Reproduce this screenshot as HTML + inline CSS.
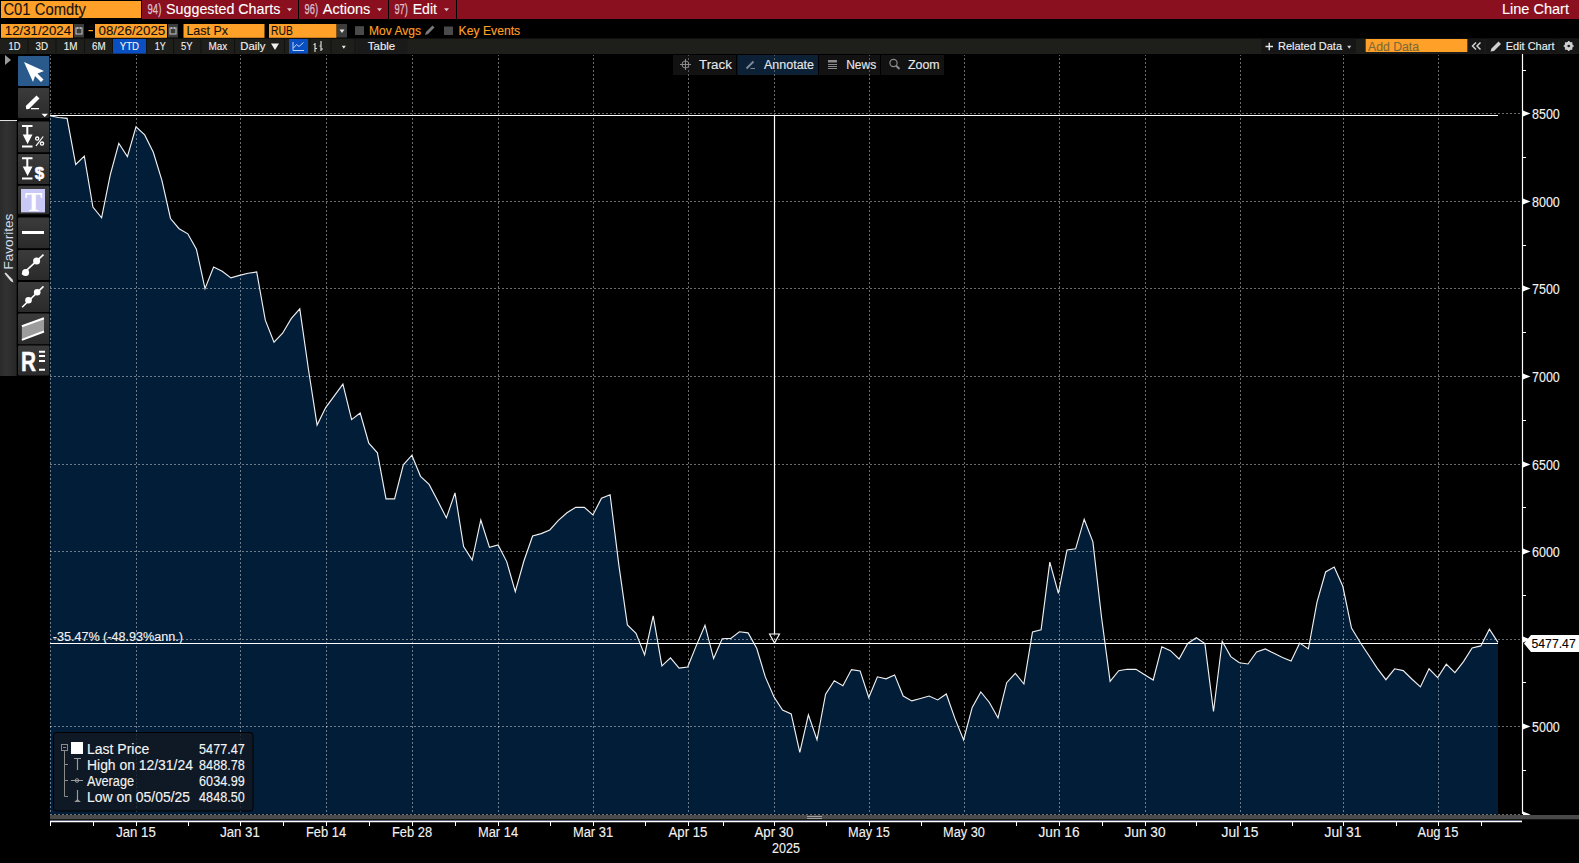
<!DOCTYPE html>
<html><head><meta charset="utf-8"><style>
*{margin:0;padding:0}
html,body{width:1579px;height:863px;overflow:hidden;background:#000}
svg{position:absolute;left:0;top:0;display:block}
</style></head><body>
<svg width="1579" height="863" viewBox="0 0 1579 863">
<polygon points="49.85,814.5 49.9,115.8 58.5,117.5 67.1,118.4 75.7,164.5 84.3,156.1 92.9,207.0 101.6,217.8 110.2,175.2 118.8,143.3 127.4,156.6 136.0,126.8 144.7,134.9 153.3,152.3 161.9,180.3 170.5,218.5 179.1,228.7 187.8,233.8 196.4,249.1 205.0,288.6 213.6,267.0 222.2,271.3 230.9,277.9 239.5,275.4 248.1,273.3 256.7,272.0 265.3,320.2 274.0,342.2 282.6,333.2 291.2,318.7 299.8,308.8 308.4,369.0 317.1,425.0 325.7,407.6 334.3,395.8 342.9,384.1 351.6,419.6 360.2,413.0 368.8,443.1 377.4,452.8 386.0,498.9 394.6,498.9 403.3,464.8 411.9,455.2 420.5,476.3 429.1,484.4 437.8,501.0 446.4,517.9 455.0,492.9 463.6,546.5 472.2,560.0 480.8,520.0 489.5,547.4 498.1,545.0 506.7,561.6 515.3,591.7 523.9,561.0 532.6,536.0 541.2,533.6 549.8,530.0 558.4,520.3 567.0,512.8 575.7,507.3 584.3,507.3 592.9,514.9 601.5,498.3 610.1,494.7 618.8,564.6 627.4,625.0 636.0,633.4 644.6,654.9 653.2,615.9 661.9,665.9 670.5,657.8 679.1,668.1 687.7,667.0 696.3,645.6 705.0,625.2 713.6,658.6 722.2,638.8 730.8,638.4 739.4,631.8 748.1,632.9 756.7,648.3 765.3,676.9 773.9,696.7 782.5,710.0 791.2,713.9 799.8,752.3 808.4,714.9 817.0,739.8 825.6,694.2 834.3,680.8 842.9,685.7 851.5,669.6 860.1,670.9 868.8,697.5 877.4,676.8 886.0,678.8 894.6,674.9 903.2,696.0 911.8,700.9 920.5,698.5 929.1,696.0 937.7,699.9 946.3,694.0 954.9,718.4 963.6,739.9 972.2,707.4 980.8,692.0 989.4,702.5 998.0,718.0 1006.7,682.7 1015.3,673.3 1023.9,684.0 1032.5,632.0 1041.1,629.9 1049.8,562.1 1058.4,593.3 1067.0,549.9 1075.6,548.8 1084.2,519.2 1092.9,541.9 1101.5,617.0 1110.1,681.3 1118.7,670.7 1127.3,669.3 1136.0,669.3 1144.6,674.7 1153.2,680.0 1161.8,646.7 1170.4,650.7 1179.1,659.0 1187.7,643.5 1196.3,637.8 1204.9,643.6 1213.5,711.5 1222.2,641.3 1230.8,656.6 1239.4,662.8 1248.0,664.0 1256.6,652.0 1265.3,648.9 1273.9,653.3 1282.5,657.5 1291.1,661.0 1299.7,643.1 1308.4,648.9 1317.0,602.1 1325.6,572.0 1334.2,567.1 1342.8,586.3 1351.5,628.1 1360.1,642.2 1368.7,655.3 1377.3,668.3 1385.9,679.7 1394.6,668.8 1403.2,670.6 1411.8,679.0 1420.4,686.9 1429.0,668.8 1437.7,677.6 1446.3,664.2 1454.9,672.6 1463.5,661.6 1472.1,648.0 1480.8,645.9 1489.4,629.2 1498.0,642.4 1498.0,814.5" fill="#021d38"/>
<line x1="50" y1="113.5" x2="1522" y2="113.5" stroke="#ffffff" stroke-width="1" stroke-dasharray="2,2" opacity="0.42"/>
<line x1="50" y1="201.5" x2="1522" y2="201.5" stroke="#ffffff" stroke-width="1" stroke-dasharray="2,2" opacity="0.42"/>
<line x1="50" y1="288.5" x2="1522" y2="288.5" stroke="#ffffff" stroke-width="1" stroke-dasharray="2,2" opacity="0.42"/>
<line x1="50" y1="376.5" x2="1522" y2="376.5" stroke="#ffffff" stroke-width="1" stroke-dasharray="2,2" opacity="0.42"/>
<line x1="50" y1="464.5" x2="1522" y2="464.5" stroke="#ffffff" stroke-width="1" stroke-dasharray="2,2" opacity="0.42"/>
<line x1="50" y1="551.5" x2="1522" y2="551.5" stroke="#ffffff" stroke-width="1" stroke-dasharray="2,2" opacity="0.42"/>
<line x1="50" y1="639.5" x2="1522" y2="639.5" stroke="#ffffff" stroke-width="1" stroke-dasharray="2,2" opacity="0.42"/>
<line x1="50" y1="726.5" x2="1522" y2="726.5" stroke="#ffffff" stroke-width="1" stroke-dasharray="2,2" opacity="0.42"/>
<line x1="50" y1="814.5" x2="1522" y2="814.5" stroke="#ffffff" stroke-width="1" stroke-dasharray="2,2" opacity="0.42"/>
<line x1="50.5" y1="55" x2="50.5" y2="814" stroke="#ffffff" stroke-width="1" stroke-dasharray="2,2" stroke-dashoffset="1" opacity="0.42"/>
<line x1="136.5" y1="55" x2="136.5" y2="814" stroke="#ffffff" stroke-width="1" stroke-dasharray="2,2" stroke-dashoffset="1" opacity="0.42"/>
<line x1="240.5" y1="55" x2="240.5" y2="814" stroke="#ffffff" stroke-width="1" stroke-dasharray="2,2" stroke-dashoffset="1" opacity="0.42"/>
<line x1="326.5" y1="55" x2="326.5" y2="814" stroke="#ffffff" stroke-width="1" stroke-dasharray="2,2" stroke-dashoffset="1" opacity="0.42"/>
<line x1="412.5" y1="55" x2="412.5" y2="814" stroke="#ffffff" stroke-width="1" stroke-dasharray="2,2" stroke-dashoffset="1" opacity="0.42"/>
<line x1="498.5" y1="55" x2="498.5" y2="814" stroke="#ffffff" stroke-width="1" stroke-dasharray="2,2" stroke-dashoffset="1" opacity="0.42"/>
<line x1="593.5" y1="55" x2="593.5" y2="814" stroke="#ffffff" stroke-width="1" stroke-dasharray="2,2" stroke-dashoffset="1" opacity="0.42"/>
<line x1="688.5" y1="55" x2="688.5" y2="814" stroke="#ffffff" stroke-width="1" stroke-dasharray="2,2" stroke-dashoffset="1" opacity="0.42"/>
<line x1="774.5" y1="55" x2="774.5" y2="814" stroke="#ffffff" stroke-width="1" stroke-dasharray="2,2" stroke-dashoffset="1" opacity="0.42"/>
<line x1="869.5" y1="55" x2="869.5" y2="814" stroke="#ffffff" stroke-width="1" stroke-dasharray="2,2" stroke-dashoffset="1" opacity="0.42"/>
<line x1="964.5" y1="55" x2="964.5" y2="814" stroke="#ffffff" stroke-width="1" stroke-dasharray="2,2" stroke-dashoffset="1" opacity="0.42"/>
<line x1="1059.5" y1="55" x2="1059.5" y2="814" stroke="#ffffff" stroke-width="1" stroke-dasharray="2,2" stroke-dashoffset="1" opacity="0.42"/>
<line x1="1145.5" y1="55" x2="1145.5" y2="814" stroke="#ffffff" stroke-width="1" stroke-dasharray="2,2" stroke-dashoffset="1" opacity="0.42"/>
<line x1="1240.5" y1="55" x2="1240.5" y2="814" stroke="#ffffff" stroke-width="1" stroke-dasharray="2,2" stroke-dashoffset="1" opacity="0.42"/>
<line x1="1343.5" y1="55" x2="1343.5" y2="814" stroke="#ffffff" stroke-width="1" stroke-dasharray="2,2" stroke-dashoffset="1" opacity="0.42"/>
<line x1="1438.5" y1="55" x2="1438.5" y2="814" stroke="#ffffff" stroke-width="1" stroke-dasharray="2,2" stroke-dashoffset="1" opacity="0.42"/>
<polyline points="49.9,115.8 58.5,117.5 67.1,118.4 75.7,164.5 84.3,156.1 92.9,207.0 101.6,217.8 110.2,175.2 118.8,143.3 127.4,156.6 136.0,126.8 144.7,134.9 153.3,152.3 161.9,180.3 170.5,218.5 179.1,228.7 187.8,233.8 196.4,249.1 205.0,288.6 213.6,267.0 222.2,271.3 230.9,277.9 239.5,275.4 248.1,273.3 256.7,272.0 265.3,320.2 274.0,342.2 282.6,333.2 291.2,318.7 299.8,308.8 308.4,369.0 317.1,425.0 325.7,407.6 334.3,395.8 342.9,384.1 351.6,419.6 360.2,413.0 368.8,443.1 377.4,452.8 386.0,498.9 394.6,498.9 403.3,464.8 411.9,455.2 420.5,476.3 429.1,484.4 437.8,501.0 446.4,517.9 455.0,492.9 463.6,546.5 472.2,560.0 480.8,520.0 489.5,547.4 498.1,545.0 506.7,561.6 515.3,591.7 523.9,561.0 532.6,536.0 541.2,533.6 549.8,530.0 558.4,520.3 567.0,512.8 575.7,507.3 584.3,507.3 592.9,514.9 601.5,498.3 610.1,494.7 618.8,564.6 627.4,625.0 636.0,633.4 644.6,654.9 653.2,615.9 661.9,665.9 670.5,657.8 679.1,668.1 687.7,667.0 696.3,645.6 705.0,625.2 713.6,658.6 722.2,638.8 730.8,638.4 739.4,631.8 748.1,632.9 756.7,648.3 765.3,676.9 773.9,696.7 782.5,710.0 791.2,713.9 799.8,752.3 808.4,714.9 817.0,739.8 825.6,694.2 834.3,680.8 842.9,685.7 851.5,669.6 860.1,670.9 868.8,697.5 877.4,676.8 886.0,678.8 894.6,674.9 903.2,696.0 911.8,700.9 920.5,698.5 929.1,696.0 937.7,699.9 946.3,694.0 954.9,718.4 963.6,739.9 972.2,707.4 980.8,692.0 989.4,702.5 998.0,718.0 1006.7,682.7 1015.3,673.3 1023.9,684.0 1032.5,632.0 1041.1,629.9 1049.8,562.1 1058.4,593.3 1067.0,549.9 1075.6,548.8 1084.2,519.2 1092.9,541.9 1101.5,617.0 1110.1,681.3 1118.7,670.7 1127.3,669.3 1136.0,669.3 1144.6,674.7 1153.2,680.0 1161.8,646.7 1170.4,650.7 1179.1,659.0 1187.7,643.5 1196.3,637.8 1204.9,643.6 1213.5,711.5 1222.2,641.3 1230.8,656.6 1239.4,662.8 1248.0,664.0 1256.6,652.0 1265.3,648.9 1273.9,653.3 1282.5,657.5 1291.1,661.0 1299.7,643.1 1308.4,648.9 1317.0,602.1 1325.6,572.0 1334.2,567.1 1342.8,586.3 1351.5,628.1 1360.1,642.2 1368.7,655.3 1377.3,668.3 1385.9,679.7 1394.6,668.8 1403.2,670.6 1411.8,679.0 1420.4,686.9 1429.0,668.8 1437.7,677.6 1446.3,664.2 1454.9,672.6 1463.5,661.6 1472.1,648.0 1480.8,645.9 1489.4,629.2 1498.0,642.4" fill="none" stroke="#f0f0f0" stroke-width="1.15"/>
<line x1="50" y1="115.5" x2="1498" y2="115.5" stroke="#fff" stroke-width="1.2"/>
<line x1="50" y1="643.5" x2="1498" y2="643.5" stroke="#fff" stroke-width="1.2"/>
<line x1="774.5" y1="115" x2="774.5" y2="634" stroke="#fff" stroke-width="1.2"/>
<path d="M769.5,634 L779.5,634 L774.5,643 Z" fill="none" stroke="#fff" stroke-width="1.1"/>
<line x1="1522.5" y1="54" x2="1522.5" y2="814" stroke="#fff" stroke-width="1.2"/>
<path d="M1523,110.5 L1530.5,113.5 L1523,116.5 Z" fill="#fff"/>
<text x="1532" y="118.9" font-family="Liberation Sans" font-size="14" fill="#f2f2f2" textLength="27.8" lengthAdjust="spacingAndGlyphs"  stroke="#f2f2f2" stroke-width="0.12">8500</text>
<path d="M1523,198.5 L1530.5,201.5 L1523,204.5 Z" fill="#fff"/>
<text x="1532" y="206.9" font-family="Liberation Sans" font-size="14" fill="#f2f2f2" textLength="27.8" lengthAdjust="spacingAndGlyphs"  stroke="#f2f2f2" stroke-width="0.12">8000</text>
<path d="M1523,285.5 L1530.5,288.5 L1523,291.5 Z" fill="#fff"/>
<text x="1532" y="293.9" font-family="Liberation Sans" font-size="14" fill="#f2f2f2" textLength="27.8" lengthAdjust="spacingAndGlyphs"  stroke="#f2f2f2" stroke-width="0.12">7500</text>
<path d="M1523,373.5 L1530.5,376.5 L1523,379.5 Z" fill="#fff"/>
<text x="1532" y="381.9" font-family="Liberation Sans" font-size="14" fill="#f2f2f2" textLength="27.8" lengthAdjust="spacingAndGlyphs"  stroke="#f2f2f2" stroke-width="0.12">7000</text>
<path d="M1523,461.5 L1530.5,464.5 L1523,467.5 Z" fill="#fff"/>
<text x="1532" y="469.9" font-family="Liberation Sans" font-size="14" fill="#f2f2f2" textLength="27.8" lengthAdjust="spacingAndGlyphs"  stroke="#f2f2f2" stroke-width="0.12">6500</text>
<path d="M1523,548.5 L1530.5,551.5 L1523,554.5 Z" fill="#fff"/>
<text x="1532" y="556.9" font-family="Liberation Sans" font-size="14" fill="#f2f2f2" textLength="27.8" lengthAdjust="spacingAndGlyphs"  stroke="#f2f2f2" stroke-width="0.12">6000</text>
<path d="M1523,636.5 L1530.5,639.5 L1523,642.5 Z" fill="#fff"/>
<text x="1532" y="644.9" font-family="Liberation Sans" font-size="14" fill="#f2f2f2" textLength="27.8" lengthAdjust="spacingAndGlyphs"  stroke="#f2f2f2" stroke-width="0.12">5500</text>
<path d="M1523,723.5 L1530.5,726.5 L1523,729.5 Z" fill="#fff"/>
<text x="1532" y="731.9" font-family="Liberation Sans" font-size="14" fill="#f2f2f2" textLength="27.8" lengthAdjust="spacingAndGlyphs"  stroke="#f2f2f2" stroke-width="0.12">5000</text>
<path d="M1523,811.5 L1530.5,814.5 L1523,817.5 Z" fill="#fff"/>
<line x1="1523" y1="70.5" x2="1526" y2="70.5" stroke="#fff" stroke-width="1"/>
<line x1="1523" y1="157.5" x2="1526" y2="157.5" stroke="#fff" stroke-width="1"/>
<line x1="1523" y1="245.5" x2="1526" y2="245.5" stroke="#fff" stroke-width="1"/>
<line x1="1523" y1="332.5" x2="1526" y2="332.5" stroke="#fff" stroke-width="1"/>
<line x1="1523" y1="420.5" x2="1526" y2="420.5" stroke="#fff" stroke-width="1"/>
<line x1="1523" y1="507.5" x2="1526" y2="507.5" stroke="#fff" stroke-width="1"/>
<line x1="1523" y1="595.5" x2="1526" y2="595.5" stroke="#fff" stroke-width="1"/>
<line x1="1523" y1="682.5" x2="1526" y2="682.5" stroke="#fff" stroke-width="1"/>
<line x1="1523" y1="770.5" x2="1526" y2="770.5" stroke="#fff" stroke-width="1"/>
<path d="M1524,643.5 L1531,635 L1579,635 L1579,652 L1531,652 Z" fill="#fff"/>
<text x="1531.5" y="648.3" font-family="Liberation Sans" font-size="13" fill="#000" textLength="44.2" lengthAdjust="spacingAndGlyphs"  stroke="#000" stroke-width="0.12">5477.47</text>
<rect x="50" y="815" width="1529" height="4.3" fill="#4a4a4a"/>
<line x1="50" y1="820.5" x2="1522" y2="820.5" stroke="#8090b0" stroke-width="1" opacity="0.7"/>
<rect x="807" y="816" width="15" height="1" fill="#a0a0a0"/><rect x="807" y="818" width="15" height="1" fill="#a0a0a0"/>
<line x1="50" y1="821.6" x2="1522" y2="821.6" stroke="#fff" stroke-width="1.2"/>
<line x1="136.5" y1="821" x2="136.5" y2="826" stroke="#fff" stroke-width="1"/>
<line x1="240.5" y1="821" x2="240.5" y2="826" stroke="#fff" stroke-width="1"/>
<line x1="326.5" y1="821" x2="326.5" y2="826" stroke="#fff" stroke-width="1"/>
<line x1="412.5" y1="821" x2="412.5" y2="826" stroke="#fff" stroke-width="1"/>
<line x1="498.5" y1="821" x2="498.5" y2="826" stroke="#fff" stroke-width="1"/>
<line x1="593.5" y1="821" x2="593.5" y2="826" stroke="#fff" stroke-width="1"/>
<line x1="688.5" y1="821" x2="688.5" y2="826" stroke="#fff" stroke-width="1"/>
<line x1="774.5" y1="821" x2="774.5" y2="826" stroke="#fff" stroke-width="1"/>
<line x1="869.5" y1="821" x2="869.5" y2="826" stroke="#fff" stroke-width="1"/>
<line x1="964.5" y1="821" x2="964.5" y2="826" stroke="#fff" stroke-width="1"/>
<line x1="1059.5" y1="821" x2="1059.5" y2="826" stroke="#fff" stroke-width="1"/>
<line x1="1145.5" y1="821" x2="1145.5" y2="826" stroke="#fff" stroke-width="1"/>
<line x1="1240.5" y1="821" x2="1240.5" y2="826" stroke="#fff" stroke-width="1"/>
<line x1="1343.5" y1="821" x2="1343.5" y2="826" stroke="#fff" stroke-width="1"/>
<line x1="1438.5" y1="821" x2="1438.5" y2="826" stroke="#fff" stroke-width="1"/>
<line x1="93.5" y1="821" x2="93.5" y2="826" stroke="#fff" stroke-width="1"/>
<line x1="188.5" y1="821" x2="188.5" y2="826" stroke="#fff" stroke-width="1"/>
<line x1="283.5" y1="821" x2="283.5" y2="826" stroke="#fff" stroke-width="1"/>
<line x1="369.5" y1="821" x2="369.5" y2="826" stroke="#fff" stroke-width="1"/>
<line x1="455.5" y1="821" x2="455.5" y2="826" stroke="#fff" stroke-width="1"/>
<line x1="550.5" y1="821" x2="550.5" y2="826" stroke="#fff" stroke-width="1"/>
<line x1="645.5" y1="821" x2="645.5" y2="826" stroke="#fff" stroke-width="1"/>
<line x1="723.5" y1="821" x2="723.5" y2="826" stroke="#fff" stroke-width="1"/>
<line x1="826.5" y1="821" x2="826.5" y2="826" stroke="#fff" stroke-width="1"/>
<line x1="921.5" y1="821" x2="921.5" y2="826" stroke="#fff" stroke-width="1"/>
<line x1="1016.5" y1="821" x2="1016.5" y2="826" stroke="#fff" stroke-width="1"/>
<line x1="1102.5" y1="821" x2="1102.5" y2="826" stroke="#fff" stroke-width="1"/>
<line x1="1196.5" y1="821" x2="1196.5" y2="826" stroke="#fff" stroke-width="1"/>
<line x1="1292.5" y1="821" x2="1292.5" y2="826" stroke="#fff" stroke-width="1"/>
<line x1="1396.5" y1="821" x2="1396.5" y2="826" stroke="#fff" stroke-width="1"/>
<line x1="1481.5" y1="821" x2="1481.5" y2="826" stroke="#fff" stroke-width="1"/>
<line x1="50.5" y1="821" x2="50.5" y2="826" stroke="#fff" stroke-width="1"/>
<text x="136" y="836.7" text-anchor="middle" font-family="Liberation Sans" font-size="14" fill="#f2f2f2" stroke="#f2f2f2" stroke-width="0.12" textLength="39.6" lengthAdjust="spacingAndGlyphs">Jan 15</text>
<text x="240" y="836.7" text-anchor="middle" font-family="Liberation Sans" font-size="14" fill="#f2f2f2" stroke="#f2f2f2" stroke-width="0.12" textLength="39.6" lengthAdjust="spacingAndGlyphs">Jan 31</text>
<text x="326" y="836.7" text-anchor="middle" font-family="Liberation Sans" font-size="14" fill="#f2f2f2" stroke="#f2f2f2" stroke-width="0.12" textLength="40.2" lengthAdjust="spacingAndGlyphs">Feb 14</text>
<text x="412" y="836.7" text-anchor="middle" font-family="Liberation Sans" font-size="14" fill="#f2f2f2" stroke="#f2f2f2" stroke-width="0.12" textLength="40.2" lengthAdjust="spacingAndGlyphs">Feb 28</text>
<text x="498" y="836.7" text-anchor="middle" font-family="Liberation Sans" font-size="14" fill="#f2f2f2" stroke="#f2f2f2" stroke-width="0.12" textLength="40.2" lengthAdjust="spacingAndGlyphs">Mar 14</text>
<text x="593" y="836.7" text-anchor="middle" font-family="Liberation Sans" font-size="14" fill="#f2f2f2" stroke="#f2f2f2" stroke-width="0.12" textLength="40.2" lengthAdjust="spacingAndGlyphs">Mar 31</text>
<text x="688" y="836.7" text-anchor="middle" font-family="Liberation Sans" font-size="14" fill="#f2f2f2" stroke="#f2f2f2" stroke-width="0.12" textLength="38.9" lengthAdjust="spacingAndGlyphs">Apr 15</text>
<text x="774" y="836.7" text-anchor="middle" font-family="Liberation Sans" font-size="14" fill="#f2f2f2" stroke="#f2f2f2" stroke-width="0.12" textLength="38.9" lengthAdjust="spacingAndGlyphs">Apr 30</text>
<text x="869" y="836.7" text-anchor="middle" font-family="Liberation Sans" font-size="14" fill="#f2f2f2" stroke="#f2f2f2" stroke-width="0.12" textLength="41.8" lengthAdjust="spacingAndGlyphs">May 15</text>
<text x="964" y="836.7" text-anchor="middle" font-family="Liberation Sans" font-size="14" fill="#f2f2f2" stroke="#f2f2f2" stroke-width="0.12" textLength="41.8" lengthAdjust="spacingAndGlyphs">May 30</text>
<text x="1059" y="836.7" text-anchor="middle" font-family="Liberation Sans" font-size="14" fill="#f2f2f2" stroke="#f2f2f2" stroke-width="0.12" textLength="41" lengthAdjust="spacingAndGlyphs">Jun 16</text>
<text x="1145" y="836.7" text-anchor="middle" font-family="Liberation Sans" font-size="14" fill="#f2f2f2" stroke="#f2f2f2" stroke-width="0.12" textLength="41" lengthAdjust="spacingAndGlyphs">Jun 30</text>
<text x="1240" y="836.7" text-anchor="middle" font-family="Liberation Sans" font-size="14" fill="#f2f2f2" stroke="#f2f2f2" stroke-width="0.12" textLength="36.9" lengthAdjust="spacingAndGlyphs">Jul 15</text>
<text x="1343" y="836.7" text-anchor="middle" font-family="Liberation Sans" font-size="14" fill="#f2f2f2" stroke="#f2f2f2" stroke-width="0.12" textLength="36.9" lengthAdjust="spacingAndGlyphs">Jul 31</text>
<text x="1438" y="836.7" text-anchor="middle" font-family="Liberation Sans" font-size="14" fill="#f2f2f2" stroke="#f2f2f2" stroke-width="0.12" textLength="41" lengthAdjust="spacingAndGlyphs">Aug 15</text>
<text x="786" y="852.5" text-anchor="middle" font-family="Liberation Sans" font-size="14" fill="#f2f2f2" stroke="#f2f2f2" stroke-width="0.12" textLength="28" lengthAdjust="spacingAndGlyphs">2025</text>
<text x="52.7" y="640.8" font-family="Liberation Sans" font-size="12.5" fill="#f2f2f2" textLength="130.2" lengthAdjust="spacingAndGlyphs"  stroke="#f2f2f2" stroke-width="0.12">-35.47% (-48.93%ann.)</text>
<rect x="53.5" y="732.5" width="199.5" height="78.5" rx="3" fill="rgb(18,25,33)" fill-opacity="0.8" stroke="#000" stroke-width="1"/>
<rect x="61.5" y="744.5" width="6" height="6" fill="none" stroke="#8a8a8a" stroke-width="1"/>
<line x1="63" y1="747.5" x2="66" y2="747.5" stroke="#8a8a8a"/>
<path d="M64.5,751 V796.5 H68 M64.5,764.5 H68 M64.5,780.5 H68" fill="none" stroke="#8a8a8a" stroke-width="1"/>
<rect x="71" y="742" width="12" height="12" fill="#fff"/>
<path d="M74,758.5 H81 M77.5,758.5 V770" stroke="#9a9a9a" stroke-width="1.2" fill="none"/>
<path d="M71,780.5 H83" stroke="#9a9a9a" stroke-width="1"/><circle cx="77" cy="780.5" r="1.8" fill="none" stroke="#9a9a9a"/>
<path d="M77.5,790 V800" stroke="#9a9a9a" stroke-width="1.2"/><path d="M74.2,802 L77.5,799 L80.8,802 Z" fill="#9a9a9a"/>
<text x="87" y="753.7" font-family="Liberation Sans" font-size="14" fill="#f4f4f4" textLength="62.2" lengthAdjust="spacingAndGlyphs"  stroke="#f4f4f4" stroke-width="0.12">Last Price</text>
<text x="199.1" y="753.7" font-family="Liberation Sans" font-size="14" fill="#f4f4f4" textLength="45.6" lengthAdjust="spacingAndGlyphs"  stroke="#f4f4f4" stroke-width="0.12">5477.47</text>
<text x="87" y="769.8" font-family="Liberation Sans" font-size="14" fill="#f4f4f4" textLength="105.9" lengthAdjust="spacingAndGlyphs"  stroke="#f4f4f4" stroke-width="0.12">High on 12/31/24</text>
<text x="199.1" y="769.8" font-family="Liberation Sans" font-size="14" fill="#f4f4f4" textLength="45.6" lengthAdjust="spacingAndGlyphs"  stroke="#f4f4f4" stroke-width="0.12">8488.78</text>
<text x="87" y="785.6" font-family="Liberation Sans" font-size="14" fill="#f4f4f4" textLength="47.0" lengthAdjust="spacingAndGlyphs"  stroke="#f4f4f4" stroke-width="0.12">Average</text>
<text x="199.1" y="785.6" font-family="Liberation Sans" font-size="14" fill="#f4f4f4" textLength="45.6" lengthAdjust="spacingAndGlyphs"  stroke="#f4f4f4" stroke-width="0.12">6034.99</text>
<text x="87" y="801.7" font-family="Liberation Sans" font-size="14" fill="#f4f4f4" textLength="103.0" lengthAdjust="spacingAndGlyphs"  stroke="#f4f4f4" stroke-width="0.12">Low on 05/05/25</text>
<text x="199.1" y="801.7" font-family="Liberation Sans" font-size="14" fill="#f4f4f4" textLength="45.6" lengthAdjust="spacingAndGlyphs"  stroke="#f4f4f4" stroke-width="0.12">4848.50</text>
<rect x="673" y="55" width="271" height="20" fill="#121212"/>
<rect x="738" y="55" width="80" height="20" fill="#0d2136"/>
<line x1="736.5" y1="55" x2="736.5" y2="75" stroke="#000" stroke-width="1"/>
<line x1="818.5" y1="55" x2="818.5" y2="75" stroke="#000" stroke-width="1"/>
<line x1="880.5" y1="55" x2="880.5" y2="75" stroke="#000" stroke-width="1"/>
<g stroke="#8a8a8a" stroke-width="1" fill="none"><circle cx="685.5" cy="64.5" r="3.5"/><path d="M680,64.5 H691 M685.5,59 V70"/></g>
<text x="699" y="69" font-family="Liberation Sans" font-size="12.5" fill="#e8e8e8" textLength="32.8" lengthAdjust="spacingAndGlyphs"  stroke="#e8e8e8" stroke-width="0.12">Track</text>
<path d="M746.5,68.5 L753.5,61.5" stroke="#7a8898" stroke-width="2"/><path d="M750.5,68.5 H755" stroke="#7a8898" stroke-width="1"/>
<text x="764" y="69" font-family="Liberation Sans" font-size="12.5" fill="#e8e8e8" textLength="50.0" lengthAdjust="spacingAndGlyphs"  stroke="#e8e8e8" stroke-width="0.12">Annotate</text>
<g fill="#8a8a8a"><rect x="828" y="60" width="9" height="2.5"/><rect x="828" y="64" width="9" height="1"/><rect x="828" y="66" width="9" height="1"/><rect x="828" y="68" width="9" height="1"/></g>
<text x="846.2" y="69" font-family="Liberation Sans" font-size="12.5" fill="#e8e8e8" textLength="30.0" lengthAdjust="spacingAndGlyphs"  stroke="#e8e8e8" stroke-width="0.12">News</text>
<g stroke="#8a8a8a" stroke-width="1.2" fill="none"><circle cx="893.5" cy="63" r="3.6"/></g><path d="M896.2,65.7 L899.5,69" stroke="#8a8a8a" stroke-width="2"/>
<text x="908" y="69" font-family="Liberation Sans" font-size="12.5" fill="#e8e8e8" textLength="31.7" lengthAdjust="spacingAndGlyphs"  stroke="#e8e8e8" stroke-width="0.12">Zoom</text>
<line x1="688.5" y1="55" x2="688.5" y2="75" stroke="#8c8c8c" stroke-width="1" stroke-dasharray="2,2" stroke-dashoffset="1" opacity="0.6"/>
<line x1="774.5" y1="55" x2="774.5" y2="75" stroke="#8c8c8c" stroke-width="1" stroke-dasharray="2,2" stroke-dashoffset="1" opacity="0.6"/>
<line x1="869.5" y1="55" x2="869.5" y2="75" stroke="#8c8c8c" stroke-width="1" stroke-dasharray="2,2" stroke-dashoffset="1" opacity="0.6"/>
<rect x="0" y="0" width="1579" height="19" fill="#8a101f"/>
<rect x="0" y="0" width="142" height="19" fill="#000"/>
<rect x="1" y="1" width="140" height="17" fill="#ffa028"/>
<line x1="141.5" y1="0" x2="141.5" y2="19" stroke="#000" stroke-width="1"/>
<line x1="298.5" y1="0" x2="298.5" y2="19" stroke="#000" stroke-width="1"/>
<line x1="388.5" y1="0" x2="388.5" y2="19" stroke="#000" stroke-width="1"/>
<line x1="456.5" y1="0" x2="456.5" y2="19" stroke="#000" stroke-width="1"/>
<text x="3.4" y="14.9" font-family="Liberation Sans" font-size="16" fill="#141414" textLength="82.4" lengthAdjust="spacingAndGlyphs"  stroke="#141414" stroke-width="0.12">C01 Comdty</text>
<text x="147.6" y="14.2" font-family="Liberation Sans" font-size="14.5" fill="#dcc0d2" textLength="13.7" lengthAdjust="spacingAndGlyphs" stroke="#dcc0d2" stroke-width="0.25">94)</text>
<text x="166.1" y="13.7" font-family="Liberation Sans" font-size="15" fill="#fff" textLength="114.2" lengthAdjust="spacingAndGlyphs"  stroke="#fff" stroke-width="0.12">Suggested Charts</text>
<path d="M287.0,8.3 L292.0,8.3 L289.5,11.3 Z" fill="#d8c8cc"/>
<text x="304.5" y="14.2" font-family="Liberation Sans" font-size="14.5" fill="#dcc0d2" textLength="13.5" lengthAdjust="spacingAndGlyphs" stroke="#dcc0d2" stroke-width="0.25">96)</text>
<text x="322.8" y="13.7" font-family="Liberation Sans" font-size="15" fill="#fff" textLength="47.4" lengthAdjust="spacingAndGlyphs"  stroke="#fff" stroke-width="0.12">Actions</text>
<path d="M377.0,8.3 L382.0,8.3 L379.5,11.3 Z" fill="#d8c8cc"/>
<text x="394.4" y="14.2" font-family="Liberation Sans" font-size="14.5" fill="#dcc0d2" textLength="13.5" lengthAdjust="spacingAndGlyphs" stroke="#dcc0d2" stroke-width="0.25">97)</text>
<text x="412.7" y="13.7" font-family="Liberation Sans" font-size="15" fill="#fff" textLength="24.3" lengthAdjust="spacingAndGlyphs"  stroke="#fff" stroke-width="0.12">Edit</text>
<path d="M444.0,8.3 L449.0,8.3 L446.5,11.3 Z" fill="#d8c8cc"/>
<text x="1501.9" y="13.8" font-family="Liberation Sans" font-size="15" fill="#fff" textLength="67.1" lengthAdjust="spacingAndGlyphs"  stroke="#fff" stroke-width="0.12">Line Chart</text>
<rect x="1" y="24" width="72" height="13.8" fill="#ffa028"/>
<text x="4.8" y="34.8" font-family="Liberation Sans" font-size="13" fill="#111" textLength="66.2" lengthAdjust="spacingAndGlyphs"  stroke="#111" stroke-width="0.12">12/31/2024</text>
<rect x="74" y="24" width="10" height="13.5" fill="#3c3c3c"/><rect x="76" y="28" width="6" height="6" fill="none" stroke="#b0b0b0" stroke-width="1.2"/><rect x="77" y="27" width="1" height="2" fill="#b0b0b0"/><rect x="80" y="27" width="1" height="2" fill="#b0b0b0"/>
<rect x="88.5" y="30" width="4.5" height="1.2" fill="#ffa028"/>
<rect x="95" y="24" width="72" height="13.8" fill="#ffa028"/>
<text x="98.5" y="34.8" font-family="Liberation Sans" font-size="13" fill="#111" textLength="66.8" lengthAdjust="spacingAndGlyphs"  stroke="#111" stroke-width="0.12">08/26/2025</text>
<rect x="168" y="24" width="10" height="13.5" fill="#3c3c3c"/><rect x="170" y="28" width="6" height="6" fill="none" stroke="#b0b0b0" stroke-width="1.2"/><rect x="171" y="27" width="1" height="2" fill="#b0b0b0"/><rect x="174" y="27" width="1" height="2" fill="#b0b0b0"/>
<rect x="183.5" y="24" width="81" height="13.8" fill="#ffa028"/>
<text x="186.4" y="34.8" font-family="Liberation Sans" font-size="13" fill="#111" textLength="41.6" lengthAdjust="spacingAndGlyphs"  stroke="#111" stroke-width="0.12">Last Px</text>
<rect x="269" y="24" width="67.5" height="13.8" fill="#ffa028"/>
<text x="271" y="34.8" font-family="Liberation Sans" font-size="13" fill="#111" textLength="21.8" lengthAdjust="spacingAndGlyphs"  stroke="#111" stroke-width="0.12">RUB</text>
<rect x="337" y="24" width="10" height="13.5" fill="#3c3c3c"/>
<path d="M339.5,29.5 L344.5,29.5 L342,33.0 Z" fill="#e8e8e8"/>
<rect x="355" y="26.2" width="9" height="8.8" fill="#4a4a4a"/>
<text x="369.1" y="34.5" font-family="Liberation Sans" font-size="12" fill="#ffa028" textLength="51.9" lengthAdjust="spacingAndGlyphs"  stroke="#ffa028" stroke-width="0.12">Mov Avgs</text>
<path d="M425,35 L426,32 L432.5,25.5 L434.5,27.5 L428,34 Z" fill="#7a7a7a"/>
<rect x="444" y="26.5" width="9" height="8.5" fill="#4a4a4a"/>
<text x="458.6" y="34.5" font-family="Liberation Sans" font-size="12" fill="#ffa028" textLength="61.6" lengthAdjust="spacingAndGlyphs"  stroke="#ffa028" stroke-width="0.12">Key Events</text>
<rect x="0" y="38.5" width="1579" height="15.5" fill="#1e1e1b"/>
<text x="8.6" y="49.7" font-family="Liberation Sans" font-size="11" fill="#f0f0f0" textLength="11.9" lengthAdjust="spacingAndGlyphs"  stroke="#f0f0f0" stroke-width="0.12">1D</text>
<text x="35.5" y="49.7" font-family="Liberation Sans" font-size="11" fill="#f0f0f0" textLength="12.5" lengthAdjust="spacingAndGlyphs"  stroke="#f0f0f0" stroke-width="0.12">3D</text>
<text x="63.8" y="49.7" font-family="Liberation Sans" font-size="11" fill="#f0f0f0" textLength="13.7" lengthAdjust="spacingAndGlyphs"  stroke="#f0f0f0" stroke-width="0.12">1M</text>
<text x="92" y="49.7" font-family="Liberation Sans" font-size="11" fill="#f0f0f0" textLength="13.5" lengthAdjust="spacingAndGlyphs"  stroke="#f0f0f0" stroke-width="0.12">6M</text>
<rect x="112.9" y="39" width="33.099999999999994" height="14.5" fill="#0a4fc2"/>
<text x="119.7" y="49.7" font-family="Liberation Sans" font-size="11" fill="#f0f0f0" textLength="19.4" lengthAdjust="spacingAndGlyphs"  stroke="#f0f0f0" stroke-width="0.12">YTD</text>
<text x="154.8" y="49.7" font-family="Liberation Sans" font-size="11" fill="#f0f0f0" textLength="10.9" lengthAdjust="spacingAndGlyphs"  stroke="#f0f0f0" stroke-width="0.12">1Y</text>
<text x="181" y="49.7" font-family="Liberation Sans" font-size="11" fill="#f0f0f0" textLength="11.5" lengthAdjust="spacingAndGlyphs"  stroke="#f0f0f0" stroke-width="0.12">5Y</text>
<text x="208.4" y="49.7" font-family="Liberation Sans" font-size="11" fill="#f0f0f0" textLength="18.8" lengthAdjust="spacingAndGlyphs"  stroke="#f0f0f0" stroke-width="0.12">Max</text>
<line x1="28" y1="39" x2="28" y2="53.5" stroke="#111" stroke-width="1"/>
<line x1="56" y1="39" x2="56" y2="53.5" stroke="#111" stroke-width="1"/>
<line x1="84.5" y1="39" x2="84.5" y2="53.5" stroke="#111" stroke-width="1"/>
<line x1="112.5" y1="39" x2="112.5" y2="53.5" stroke="#111" stroke-width="1"/>
<line x1="146.5" y1="39" x2="146.5" y2="53.5" stroke="#111" stroke-width="1"/>
<line x1="173.6" y1="39" x2="173.6" y2="53.5" stroke="#111" stroke-width="1"/>
<line x1="201" y1="39" x2="201" y2="53.5" stroke="#111" stroke-width="1"/>
<line x1="234.6" y1="39" x2="234.6" y2="53.5" stroke="#111" stroke-width="1"/>
<line x1="284.5" y1="39" x2="284.5" y2="53.5" stroke="#111" stroke-width="1"/>
<line x1="310" y1="39" x2="310" y2="53.5" stroke="#111" stroke-width="1"/>
<line x1="331" y1="39" x2="331" y2="53.5" stroke="#111" stroke-width="1"/>
<line x1="355" y1="39" x2="355" y2="53.5" stroke="#111" stroke-width="1"/>
<text x="240.3" y="49.7" font-family="Liberation Sans" font-size="11" fill="#f0f0f0" textLength="25.1" lengthAdjust="spacingAndGlyphs"  stroke="#f0f0f0" stroke-width="0.12">Daily</text>
<path d="M271,43.5 L279,43.5 L275,50 Z" fill="#f0f0f0"/>
<rect x="289" y="39" width="19" height="14.5" fill="#0a4fc2"/>
<path d="M293,42 V50.5 H304 M293.5,48 L296.5,44.5 L299,46.5 L303.5,42.5" fill="none" stroke="#c0d4f4" stroke-width="1"/>
<path d="M315,43 V52 M321,41 V51 M313.5,44.5 H315 M315,48.5 H317 M319.5,46 H321 M321,49 H323" fill="none" stroke="#d8d8d8" stroke-width="1.2"/>
<path d="M341.8,45.7 L345.8,45.7 L343.8,48.7 Z" fill="#e8e8e8"/>
<rect x="356.5" y="39" width="51" height="14.5" fill="#1a1a1a"/>
<text x="367.8" y="49.7" font-family="Liberation Sans" font-size="11" fill="#f0f0f0" textLength="27.4" lengthAdjust="spacingAndGlyphs"  stroke="#f0f0f0" stroke-width="0.12">Table</text>
<rect x="1261.3" y="39" width="94.7" height="14.5" fill="#161616"/>
<path d="M1265.5,46.5 H1273 M1269.25,42.7 V50.3" stroke="#e8e8e8" stroke-width="1.4"/>
<text x="1278" y="49.5" font-family="Liberation Sans" font-size="11" fill="#f0f0f0" textLength="64.0" lengthAdjust="spacingAndGlyphs"  stroke="#f0f0f0" stroke-width="0.12">Related Data</text>
<path d="M1347.2,45.8 L1351.2,45.8 L1349.2,48.8 Z" fill="#d0d0d0"/>
<rect x="1365.7" y="39" width="101.6" height="13" fill="#ffa028"/>
<text x="1368" y="50.5" font-family="Liberation Sans" font-size="12" fill="#7d6a3a" textLength="51.0" lengthAdjust="spacingAndGlyphs"  stroke="#7d6a3a" stroke-width="0.12">Add Data</text>
<rect x="1468.5" y="39" width="16" height="14.5" fill="#161616"/>
<path d="M1476,42.5 L1472.5,46 L1476,49.5 M1480.5,42.5 L1477,46 L1480.5,49.5" fill="none" stroke="#d0d0d0" stroke-width="1.5"/>
<rect x="1485.5" y="39" width="72.8" height="14.5" fill="#161616"/>
<path d="M1490.5,51.5 L1491.5,48.5 L1498.5,41.5 L1501,44 L1494,51 Z" fill="#d0d0d0"/>
<text x="1505.8" y="49.5" font-family="Liberation Sans" font-size="11" fill="#f0f0f0" textLength="48.7" lengthAdjust="spacingAndGlyphs"  stroke="#f0f0f0" stroke-width="0.12">Edit Chart</text>
<rect x="1559.4" y="39" width="19.6" height="14.5" fill="#161616"/>
<g transform="translate(1568.7,46)"><circle r="3.2" fill="none" stroke="#d0d0d0" stroke-width="2"/><g stroke="#d0d0d0" stroke-width="1.6"><path d="M0,-5 V5 M-5,0 H5 M-3.5,-3.5 L3.5,3.5 M-3.5,3.5 L3.5,-3.5"/></g><circle r="1.3" fill="#161616"/></g>
<path d="M5,55 L11,60 L5,65 Z" fill="#9a9a9a"/>
<rect x="0" y="120" width="17" height="1" fill="#e0e0e0"/>
<defs><linearGradient id="fav" x1="0" y1="0" x2="1" y2="0"><stop offset="0" stop-color="#2a2a2a"/><stop offset="0.4" stop-color="#323232"/><stop offset="1" stop-color="#262626"/></linearGradient></defs>
<rect x="0" y="121" width="17" height="255" fill="url(#fav)"/>
<rect x="16" y="121" width="1" height="255" fill="#1a1a1a"/>
<text transform="translate(13.3,269.5) rotate(-90)" font-family="Liberation Sans" font-size="13.5" fill="#d4dcec" textLength="55.8" lengthAdjust="spacingAndGlyphs">Favorites</text>
<path d="M4.5,273.5 L5.8,272.5 L12.5,279.5 L13.5,282.5 L10.8,281.3 Z" fill="#e0e0e0"/>
<defs><linearGradient id="bg" x1="0" y1="0" x2="0" y2="1"><stop offset="0" stop-color="#3b3b3b"/><stop offset="1" stop-color="#2a2a2a"/></linearGradient></defs>
<rect x="18" y="56" width="31.3" height="30" rx="1" fill="#2a5a8c"/>
<path d="M24,62 L44,71 L37.5,73.5 L43.5,79.5 L41,82 L35,76 L33,82 Z" fill="#fff"/>
<rect x="18" y="88" width="31.3" height="30" rx="1" fill="url(#bg)"/>
<path d="M26.2,109.3 L25.8,106 L36.5,95.5 L39.5,98.5 L29,109 Z" fill="#fff"/><rect x="31" y="108" width="8" height="1.3" fill="#fff"/>
<path d="M41.5,113.8 L48,113.8 L44.75,117 Z" fill="#fff"/>
<rect x="18" y="121.5" width="31.3" height="30.69999999999999" rx="1" fill="url(#bg)"/>
<path d="M22,126 H32.5 M27.3,126 V135 M22,146.5 H32.5" stroke="#fff" stroke-width="2" fill="none"/><path d="M22.7,134.5 H32.5 L27.6,144 Z" fill="#fff"/>
<g fill="none" stroke="#fff" stroke-width="1.3"><circle cx="37.2" cy="138.6" r="1.6"/><circle cx="42" cy="143.6" r="1.6"/></g><path d="M43.2,136.5 L36,145.8" stroke="#fff" stroke-width="1.2"/>
<rect x="18" y="154" width="31.3" height="30" rx="1" fill="url(#bg)"/>
<path d="M22,158.3 H32.5 M27.3,158.3 V167 M22,178.5 H32.5" stroke="#fff" stroke-width="2" fill="none"/><path d="M22.7,166.5 H32.5 L27.6,176 Z" fill="#fff"/>
<text x="34.8" y="179.2" font-family="Liberation Sans" font-size="17" fill="#fff" font-weight="bold" textLength="9.4" lengthAdjust="spacingAndGlyphs" stroke="#fff" stroke-width="0.6">$</text>
<rect x="18" y="185.8" width="31.3" height="28.399999999999977" rx="1" fill="url(#bg)"/>
<rect x="21" y="189" width="24" height="23.4" fill="#c9c9f6"/>
<text x="25" y="211" font-family="Liberation Serif" font-size="28" font-weight="bold" fill="#fff" textLength="17.4" lengthAdjust="spacingAndGlyphs">T</text>
<rect x="18" y="217.5" width="31.3" height="30.69999999999999" rx="1" fill="url(#bg)"/>
<rect x="22" y="231" width="22" height="3" fill="#fff"/>
<rect x="18" y="250" width="31.3" height="30" rx="1" fill="url(#bg)"/>
<path d="M22.1,274.3 L43.5,254.6" stroke="#fff" stroke-width="1.6"/><circle cx="25.6" cy="272.5" r="3.5" fill="#fff"/><circle cx="36.6" cy="261" r="3.5" fill="#fff"/>
<rect x="18" y="282" width="31.3" height="30" rx="1" fill="url(#bg)"/>
<path d="M22.1,307.3 L43.5,286.4" stroke="#fff" stroke-width="1.6"/><circle cx="28.5" cy="300.3" r="3.3" fill="#fff"/><circle cx="37.2" cy="292.2" r="3.3" fill="#fff"/>
<rect x="18" y="313.5" width="31.3" height="30.80000000000001" rx="1" fill="url(#bg)"/>
<path d="M21.9,326.3 L44,318.3 L44,331.5 L21.9,339.9 Z" fill="#9c9c9c"/><path d="M21.9,326.3 L44,318.3 M21.9,339.9 L44,331.5" stroke="#fff" stroke-width="2"/>
<rect x="18" y="345.6" width="31.3" height="30.0" rx="1" fill="url(#bg)"/>
<text x="21" y="371.2" font-family="Liberation Sans" font-size="27.5" font-weight="bold" fill="#fff" stroke="#fff" stroke-width="0.5" textLength="15" lengthAdjust="spacingAndGlyphs">R</text>
<path d="M39,351.8 H45 M39,356 H45 M39,361 H45 M39,369.8 H45" stroke="#fff" stroke-width="2.1"/>
</svg>
</body></html>
